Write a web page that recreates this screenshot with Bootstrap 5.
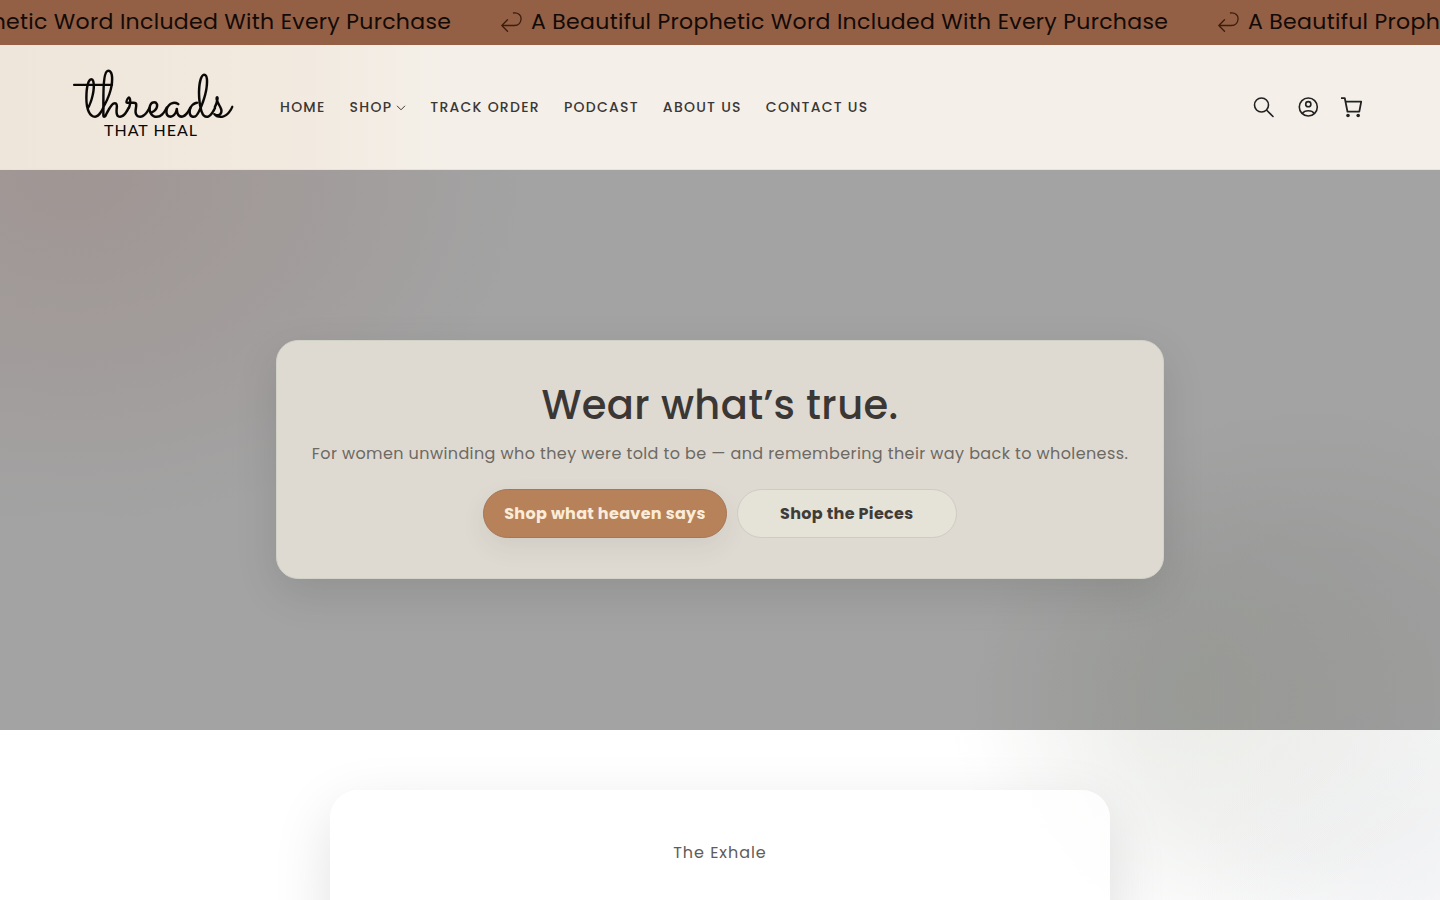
<!DOCTYPE html>
<html lang="en">
<head>
<meta charset="utf-8">
<meta name="viewport" content="width=device-width, initial-scale=1">
<title>Threads That Heal</title>
<link href="https://cdn.jsdelivr.net/npm/bootstrap@5.3.0/dist/css/bootstrap.min.css" rel="stylesheet">
<style>
  body { font-family: Poppins, Inter, "Open Sans", sans-serif; background: #fff; color: #3b3735; overflow-x: hidden; }

  /* Soft colour glows that stay put while the page scrolls */
  .glow {
    background-image:
      radial-gradient(460px 360px at 5% 19%, rgba(136, 52, 36, .12), rgba(136, 52, 36, .06) 55%, rgba(136, 52, 36, 0)),
      radial-gradient(260px 240px at 83% 77%, rgba(60, 70, 0, .04), rgba(60, 70, 0, 0)),
      radial-gradient(340px 300px at 91% 78%, rgba(40, 50, 20, .06), rgba(40, 50, 30, .05) 50%, rgba(40, 50, 40, 0)),
      radial-gradient(260px 220px at 100% 100%, rgba(60, 80, 180, .03), rgba(60, 80, 180, 0));
    background-attachment: fixed;
  }

  .announce { background: #935f45; color: #120a06; height: 45px; font-size: 22px; line-height: 44px; letter-spacing: .014em; }
  .announce-track { margin-left: -216px; }
  .announce-item { flex: 0 0 717px; }

  .site-header {
    min-height: 125px; padding: 0 66px; border-bottom: 1px solid #e6e2dc;
    background: linear-gradient(90deg, #efe6db 0, #f2e9df 19%, #f4f0e9 32%);
  }
  .menu-link {
    font-size: 14px; font-weight: 500; letter-spacing: .09em; padding: 12px;
    color: #3b3735; text-decoration: none; white-space: nowrap;
  }
  .menu-link:hover { text-decoration: underline; }
  .icon-btn { width: 44px; height: 44px; color: #222; }

  .hero { background-color: #a3a3a3; min-height: 560px; padding-top: 19px; }
  .hero-card {
    background: #dedad2; border: 1px solid #d0d2c6; border-radius: 22px; padding: 36px 35px 40px;
    box-shadow: 0 14px 44px rgba(0, 0, 0, .11);
  }
  .hero-title { font-size: 40px; font-weight: 500; line-height: 56px; letter-spacing: .01em; color: #3b3735; }
  .hero-text { font-size: 16px; line-height: 26px; letter-spacing: .025em; color: #6d6963; margin-bottom: 22px; }
  .cta-row { gap: 10px; }
  .cta { font-size: 16px; font-weight: 700; line-height: 27px; letter-spacing: .02em; padding: 10px 20px; }
  .cta-main, .cta-main:hover { background: #b78259; border-color: #a5765a; color: #fbecd9; box-shadow: 0 10px 24px rgba(60, 50, 40, .08); }
  .cta-alt, .cta-alt:hover { background: #e5e2d8; border-color: #cfcbc4; color: #3f3c38; min-width: 220px; }

  .intro { padding: 60px 16px; }
  .intro-card {
    max-width: 780px; min-height: 420px; padding: 48px; border-radius: 28px;
    background: rgba(255, 255, 255, .8); box-shadow: 0 20px 60px rgba(0, 0, 0, .12);
  }
  .intro-label { font-size: 16px; line-height: 30px; letter-spacing: .06em; color: #5f5c5a; }
</style>
</head>
<body>

<div class="announce overflow-hidden">
  <div class="announce-track d-flex" id="track">
    <div class="announce-item d-flex align-items-center text-nowrap">
      <svg class="flex-shrink-0 me-2" width="22" height="22" viewBox="0 0 22 22" fill="none" stroke="#3d1d0d" stroke-width="1.3" stroke-linecap="round" stroke-linejoin="round" aria-hidden="true"><path d="M12.500 2C17.500 1.500 20.500 4.500 20 8.500C19.600 12 17 14.500 13.500 14.500H.8M6.500 8.800L.8 14.500L6.500 20.200"/></svg>
      <span>A Beautiful Prophetic Word Included With Every Purchase</span>
    </div>
  </div>
</div>

<header class="site-header d-flex align-items-center">
  <a href="#" class="flex-shrink-0 me-4" aria-label="Threads That Heal">
    <svg class="d-block" width="178" height="108" viewBox="0 0 178 108" fill="#0b0908">
      <text x="19" y="64" font-family="Sacramento, 'Liberation Serif', cursive" font-size="68">threads</text>
      <text x="38" y="83" font-family="Lato, sans-serif" font-size="16" letter-spacing="1">THAT HEAL</text>
    </svg>
  </a>
  <nav class="d-flex flex-wrap align-items-center" aria-label="Main">
    <a class="menu-link" href="#">HOME</a>
    <a class="menu-link" href="#">SHOP<svg class="ms-1" width="10" height="6" viewBox="0 0 10 6" fill="none" stroke="currentColor" aria-hidden="true"><path d="M1 .8L5 4.800L9 .8"/></svg></a>
    <a class="menu-link" href="#">TRACK ORDER</a>
    <a class="menu-link" href="#">PODCAST</a>
    <a class="menu-link" href="#">ABOUT US</a>
    <a class="menu-link" href="#">CONTACT US</a>
  </nav>
  <div class="d-flex ms-auto">
    <button type="button" class="icon-btn btn p-0 border-0" aria-label="Search">
      <svg width="22" height="22" viewBox="0 0 22 22" fill="none" stroke="currentColor" stroke-width="1.6" stroke-linecap="round"><circle cx="8.500" cy="8" r="7"/><path d="M13.700 13.200L20 19.500"/></svg>
    </button>
    <button type="button" class="icon-btn btn p-0 border-0" aria-label="Account">
      <svg width="22" height="22" viewBox="0 0 22 22" fill="none" stroke="currentColor" stroke-width="1.6"><circle cx="11.300" cy="10" r="9"/><circle cx="11.300" cy="7.200" r="2.600"/><path d="M5.300 16.500C7.800 12.900 14.800 12.900 17.300 16.500"/></svg>
    </button>
    <button type="button" class="icon-btn btn p-0 border-0" aria-label="Cart">
      <svg width="22" height="22" viewBox="0 0 22 22" fill="none" stroke="currentColor" stroke-width="1.8" stroke-linejoin="round"><path d="M0 1.200H3.800L6.500 14.700H18.300L20.200 4.700H4.500"/><circle cx="7" cy="18.500" r="1.800" fill="currentColor" stroke="none"/><circle cx="17.200" cy="18.500" r="1.800" fill="currentColor" stroke="none"/></svg>
    </button>
  </div>
</header>

<main>
  <section class="hero glow d-flex align-items-center justify-content-center">
    <div class="hero-card text-center">
      <h1 class="hero-title mb-2">Wear what’s true.</h1>
      <p class="hero-text">For women unwinding who they were told to be — and remembering their way back to wholeness.</p>
      <div class="cta-row d-flex flex-wrap justify-content-center">
        <a href="#" class="cta cta-main btn rounded-pill">Shop what heaven says</a>
        <a href="#" class="cta cta-alt btn rounded-pill">Shop the Pieces</a>
      </div>
    </div>
  </section>

  <section class="intro glow">
    <div class="intro-card mx-auto text-center">
      <p class="intro-label mb-0">The Exhale</p>
    </div>
  </section>
</main>

<script src="https://cdn.jsdelivr.net/npm/bootstrap@5.3.0/dist/js/bootstrap.bundle.min.js"></script>
<script>
  // Repeat the announcement so that the strip fills wide windows
  const track = document.getElementById('track');
  const first = track.firstElementChild;
  for (let i = 0; i < 4; i++) {
    track.append(first.cloneNode(true));
  }
</script>
</body>
</html>
